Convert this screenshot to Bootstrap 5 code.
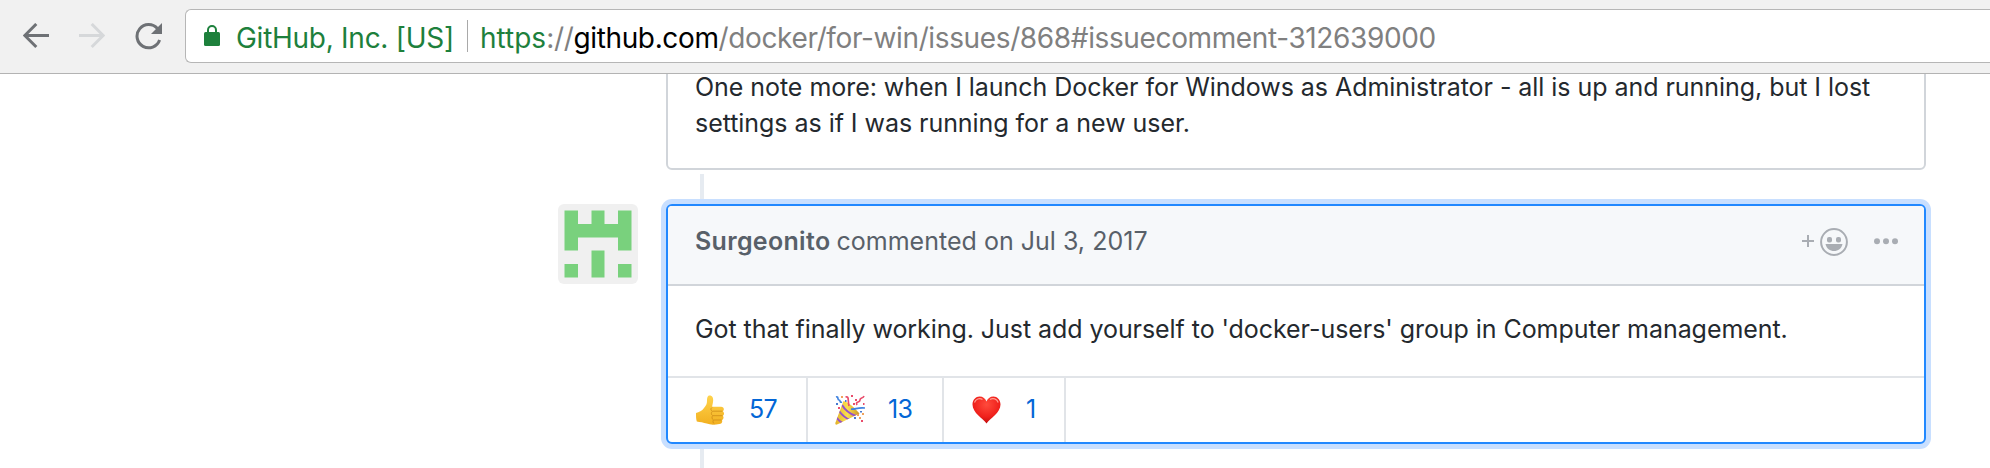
<!DOCTYPE html>
<html lang="en">
<head>
<meta charset="utf-8">
<title>docker/for-win issue 868</title>
<link href="https://cdn.jsdelivr.net/npm/bootstrap@5.3.0/dist/css/bootstrap.min.css" rel="stylesheet">
<script src="https://cdn.jsdelivr.net/npm/bootstrap@5.3.0/dist/js/bootstrap.bundle.min.js"></script>
<style>
body { font-family: Inter, "Liberation Sans", sans-serif; font-size: 25px; line-height: 36px; color: #24292e; letter-spacing: -.045px; height: 468px; }
svg { display: block; flex: none; }
.browser-bar { height: 74px; background: #f1f1f1; border-bottom: 1px solid #b3b3b3; padding: 9px 0 10px 23px; z-index: 2; }
.nav-icons { width: 162px; gap: 30px; height: 54px; }
.omnibox { height: 54px; border: 1px solid #b6b6b6; border-right: 0; border-radius: 6px 0 0 6px; font-size: 28px; white-space: pre; padding: 0 0 0 18px; }
.omnibox .addr { line-height: 52px; padding-top: 2px; height: 52px; }
.secure { color: #1d803c; }
.issuer { letter-spacing: -.27px; width: 231px; margin-left: 16px; }
.sep { width: 1px; height: 32px; background: #a9a9a9; margin-right: 12px; }
.url-rest { color: #808080; letter-spacing: -.37px; }
.thread { width: 1260px; margin-left: 666px; }
.comment { border: 2px solid #d1d5da; border-radius: 6px; }
.comment.previous { margin-top: -35px; }
.comment.previous .comment-text { padding: 28px 27px 27px; }
.comment.targeted { border-color: #2188ff; box-shadow: 0 0 0 5px #c8dfff; }
.link-line { width: 4px; margin-left: 34px; background: #e6ebf1; }
.avatar { left: -108px; top: 0; }
.comment-head { height: 80px; background: #f6f8fa; border-bottom: 2px solid #d1d5da; border-radius: 4px 4px 0 0; color: #586069; padding: 0 26px 8px 27px; letter-spacing: .02px; }
.author { font-weight: 600; letter-spacing: .32px; margin-right: 6px; }
.comment-text { padding: 25px 27px 29px; white-space: nowrap; }
.targeted .comment-text { letter-spacing: -.06px; }
.reactions { height: 66px; border-top: 2px solid #e1e4e8; color: #0366d6; }
.reaction { border-right: 2px solid #e1e4e8; letter-spacing: -.6px; }
.reaction span { padding-bottom: 2px; }
</style>
</head>
<body class="bg-white overflow-hidden">
<header class="browser-bar d-flex position-relative">
  <div class="nav-icons d-flex align-items-center">
    <svg width="26" height="26" viewBox="0 0 26 26" fill="none" stroke="#6e7175" stroke-width="3"><path d="M26 12.5H2M13.3 1 1.8 12.5 13.3 24"/></svg>
    <svg width="26" height="26" viewBox="0 0 26 26" fill="none" stroke="#d6d8da" stroke-width="3"><path d="M0 12.5h24M12.7 1l11.5 11.5L12.7 24"/></svg>
    <svg width="28" height="28" viewBox="0 0 28 28"><path d="M22.4 6.6A11.6 11.6 0 1 0 24.6 18" fill="none" stroke="#6e7175" stroke-width="3"/><path d="M27 1v11H16z" fill="#6e7175"/></svg>
  </div>
  <div class="omnibox bg-white flex-grow-1 d-flex align-items-center">
    <svg width="16" height="22" viewBox="0 0 16 22"><path d="M4 9V5a4 4 0 0 1 8 0v4" fill="none" stroke="#1d803c" stroke-width="2"/><rect y="7" width="16" height="14" rx="1.5" fill="#1d803c"/></svg>
    <div class="addr issuer secure">GitHub, Inc. [US]</div>
    <div class="sep"></div>
    <div class="addr url-rest"><span class="secure" style="letter-spacing:0">https</span><span style="letter-spacing:-.3px">://</span><span class="text-black">github.com</span>/docker/for-win/issues/868#issuecomment-312639000</div>
  </div>
</header>

<main class="thread">
  <article class="comment previous">
    <div class="comment-text">One note more: when I launch Docker for Windows as Administrator - all is up and running, but I lost<br>settings as if I was running for a new user.</div>
  </article>
  <div class="link-line" style="height:30px;margin-top:4px"></div>
  <article class="position-relative">
    <svg class="avatar position-absolute" width="80" height="80" viewBox="0 0 80 80"><rect width="80" height="80" rx="6" fill="#f0f0f0"/><path fill="#79d17d" d="M6.5 6.5H20V20H33.5V6.5H46.5V20H60V6.5H73.5V46.5H60V33.5H20V46.5H6.5zM33.5 46.5h13v27h-13zM6.5 60H20v13.5H6.5zM60 60h13.5v13.5H60z"/></svg>
    <div class="comment targeted bg-white">
      <div class="comment-head d-flex align-items-center">
        <span class="author">Surgeonito</span><span>commented on Jul 3, 2017</span>
        <svg class="ms-auto overflow-visible" width="98" height="28" viewBox="1800 228 98 28" fill="#a9adb3"><g transform="translate(0 5)">
          <path d="M1802 236h12v2h-12zM1807 231h2v12h-2z"/>
          <circle cx="1834" cy="238" r="12.9" fill="none" stroke="#a9adb3" stroke-width="2"/>
          <rect x="1827" y="233" width="5" height="5.4" rx="2"/><rect x="1836" y="233" width="5" height="5.4" rx="2"/>
          <path d="M1825.5 240h17c-.8 4.400-4.600 7-8.500 7s-7.700-2.600-8.500-7z"/>
          <circle cx="1877" cy="237.300" r="3"/><circle cx="1886" cy="237.300" r="3"/><circle cx="1895" cy="237.300" r="3"/></g>
        </svg>
      </div>
      <div class="comment-text">Got that finally working. Just add yourself to 'docker-users' group in Computer management.</div>
      <div class="reactions d-flex">
        <div class="reaction d-flex align-items-center" style="width:140px;padding-left:28px;gap:25px">
          <svg width="28" height="30" viewBox="0 0 28 30">
            <defs><linearGradient id="skin" x2="0" y2="1"><stop stop-color="#ffd34c"/><stop offset="1" stop-color="#f2b020"/></linearGradient></defs>
            <path fill="url(#skin)" d="M0 18c3-1 6-2 8-5 2-2.600 3-4 3-7 0-3 .4-5.500 2.600-5.500C17 .5 17.500 4 17 7c-.3 2-.8 3.500-.8 4.700H25c3.200 0 3.700 3.500 1.500 4.500 2.200 1 1.800 4 .2 4.500 1.500 1.200.8 3.800-.8 4.300 1 1.600-.2 4-2.600 4-4.300.8-8.800 1.100-12.600-.4C7.500 27.500 4 27 .8 26.500 0 24 0 21 0 18z"/>
            <path fill="none" stroke="#d6951c" stroke-width="1" d="M17 16.200h9.500M17 20.700h9.500M17.500 25h8M16 12.500c-1.500 1-1.500 3 .5 3.700-1.500 1.200-1.500 3.500.2 4.500-1.200 1.300-.9 3.500.8 4.300-1 1-.6 3 .8 3.700"/>
          </svg>
          <span>57</span>
        </div>
        <div class="reaction d-flex align-items-center" style="width:136px;padding-left:27px;gap:23px">
          <svg width="30" height="30" viewBox="0 0 30 30">
            <defs><linearGradient id="cone"><stop stop-color="#e3b12a"/><stop offset=".5" stop-color="#fbe04d"/><stop offset="1" stop-color="#c9952b"/></linearGradient><clipPath id="coneclip"><path d="M8.500 6C13 7 19 12 24.500 18.500L1.500 29.700Q0 29.500.3 28z"/></clipPath></defs>
            <path fill="url(#cone)" d="M8.500 6C13 7 19 12 24.500 18.500L1.500 29.700Q0 29.500.3 28z"/>
            <path clip-path="url(#coneclip)" fill="none" stroke="#9653c9" stroke-width="2" d="M7 10c3 5 8 9 14 11M4 16c3 4 6 7 11 9M1 22c2 3 4 5 8 7"/>
            <g fill="none" stroke-width="1.700">
              <path stroke="#e94d6c" d="M10.500 2c4-1 2 3 3.500 9M22 10c-2-4 3-2 3-5s3-1 4-4"/>
              <path stroke="#3f82df" d="M16 14c4 1 6-2 14-1M1 2c3-1 1 3 3 3s0 3 3 2"/>
            </g>
            <g fill="#e94d6c"><path d="M16 0h2v2h-2zM20 4h2v2h-2zM3 12h2v2H3zM18 8h2v2h-2zM26 25h2v2h-2zM28 8h1.500v2H28z"/></g>
            <g fill="#f0a25c"><path d="M22 19h2v2h-2zM27 18h2v2h-2zM24 22h2v2h-2zM6 1h2v2H6z"/></g>
            <g fill="#4678cf"><path d="M19 22h2v2h-2zM10 5h1.500v2H10zM1 8h2v2H1zM25 16h2v1.500h-2z"/></g>
          </svg>
          <span>13</span>
        </div>
        <div class="reaction d-flex align-items-center" style="width:122px;padding-left:28px;gap:25px">
          <svg width="29" height="28" viewBox="0 0 29 28">
            <defs><radialGradient id="heart" cx=".5" cy=".3" r=".7"><stop stop-color="#ff4b3c"/><stop offset=".65" stop-color="#f0211c"/><stop offset="1" stop-color="#c00d0d"/></radialGradient></defs>
            <path fill="url(#heart)" d="M14.500 27.500C11 22.500.5 17 .5 8.500.5 3.500 4 .5 7.500.5c3.500 0 6 2 7 5 1-3 3.500-5 7-5 3.500 0 7 3 7 8 0 8.500-10.500 14-14 19z"/>
            <path fill="none" stroke="#ff9d91" stroke-width="1.200" d="M2.500 6.500c1-3.500 5-5 8-3M18 3.500c3-2 7-.5 8.200 3"/>
          </svg>
          <span>1</span>
        </div>
      </div>
    </div>
  </article>
  <div class="link-line" style="height:24px;margin-top:5px"></div>
</main>
</body>
</html>
